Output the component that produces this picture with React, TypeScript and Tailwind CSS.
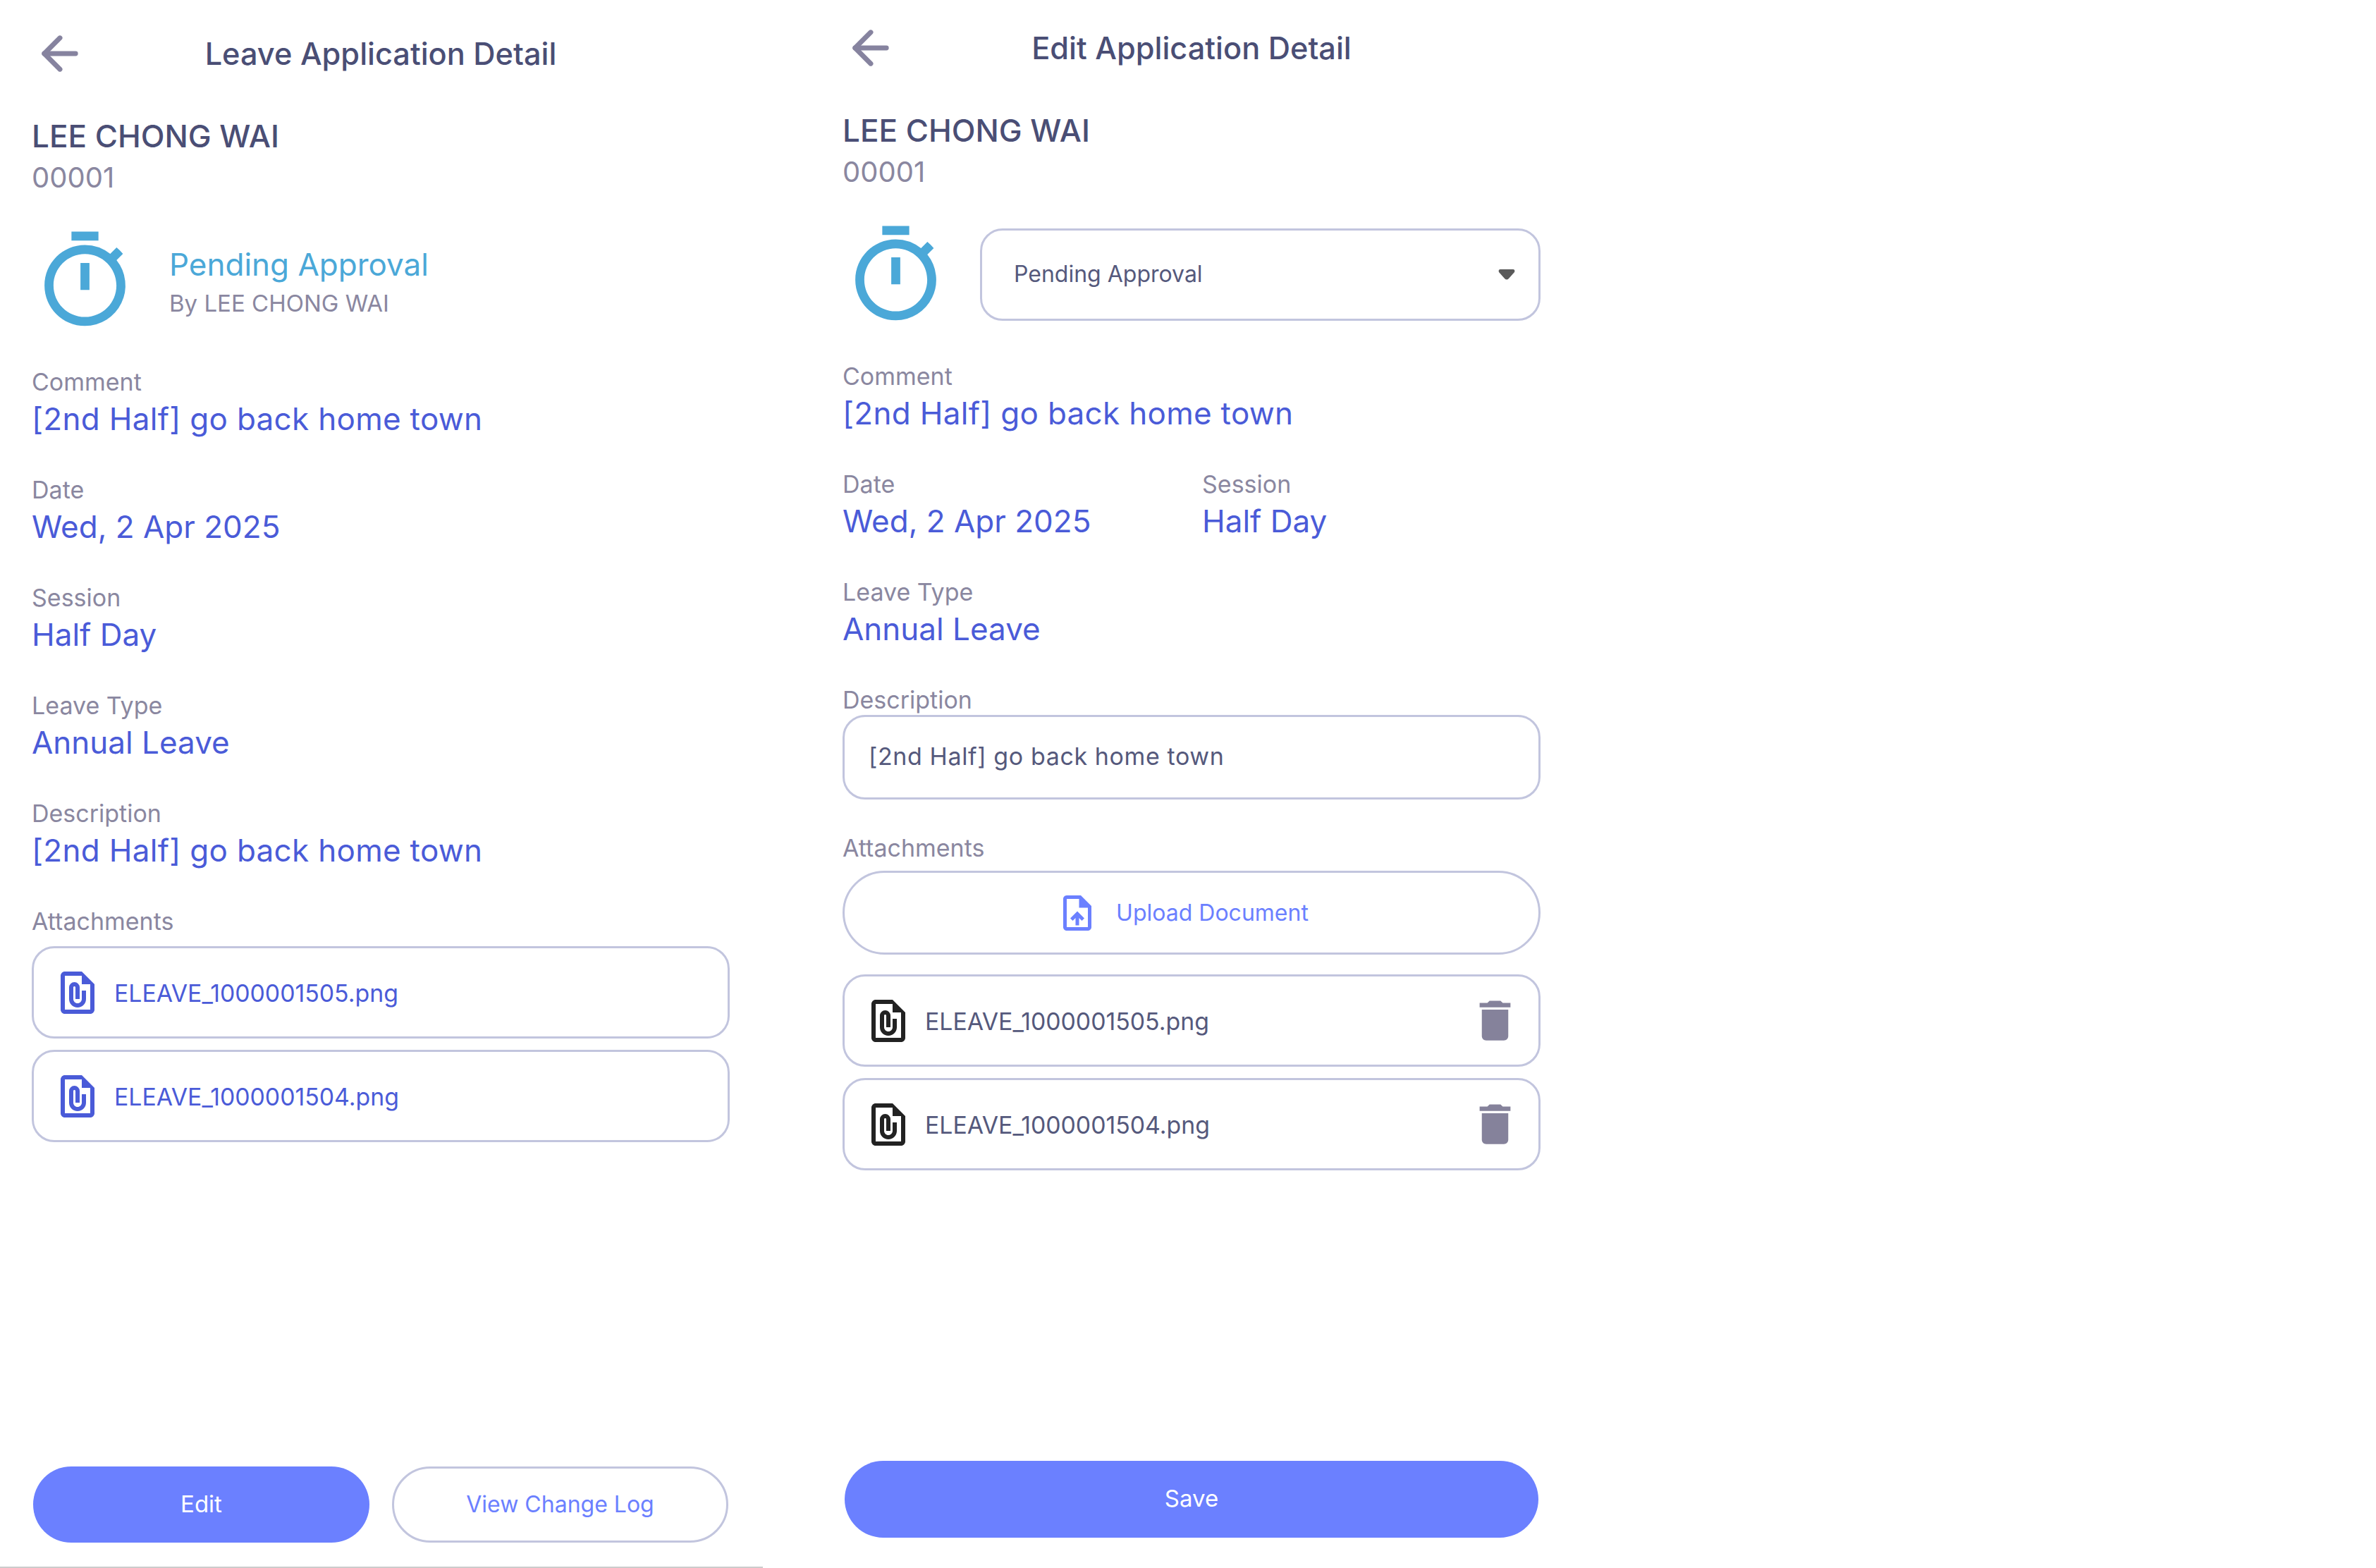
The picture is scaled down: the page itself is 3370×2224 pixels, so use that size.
import { ArrowLeft } from 'lucide-react';
import { MdDelete, MdOutlineFilePresent, MdOutlineTimer, MdOutlineUploadFile } from 'react-icons/md';

function Header({ title }: { title: string }) {
  return (
    <div className="relative flex h-[60px] items-center justify-center">
      <ArrowLeft size={76} strokeWidth={2.2} className="absolute left-[2px] top-[-8px] text-[#86839f]" />
      <h1 className="text-[43.3px] leading-[60px] font-medium text-[#4a4e75]">{title}</h1>
    </div>
  );
}

function Name() {
  return (
    <div className="mt-[57px]">
      <div className="text-[44px] leading-[60px] font-medium text-[#4a4e75]">LEE CHONG WAI</div>
      <div className="text-[40px] leading-[58px] text-[#8a87a0]">00001</div>
    </div>
  );
}

function Field({ label, value, className = '', valueClassName = '' }: { label: string; value: string; className?: string; valueClassName?: string }) {
  return (
    <div className={className}>
      <div className="text-[34px] leading-[46px] text-[#8a87a0]">{label}</div>
      <div className={`text-[44px] leading-[58px] text-[#4a5bd8] ${valueClassName}`}>{value}</div>
    </div>
  );
}

function Label({ text, className = '' }: { text: string; className?: string }) {
  return <div className={`text-[34px] leading-[46px] text-[#8a87a0] ${className}`}>{text}</div>;
}

function FileRow({ name, editable }: { name: string; editable?: boolean }) {
  return (
    <div className="flex h-[131px] items-center rounded-[32px] border-[3px] border-[#c2c5de] bg-white pl-[26px] pr-[24px]">
      <MdOutlineFilePresent size={72} className={editable ? 'shrink-0 text-[#222222]' : 'shrink-0 text-[#4a5bd8]'} />
      <span className={`ml-[16px] mt-[2px] text-[33.8px] leading-[48px] ${editable ? 'text-[#55597c]' : 'text-[#4a5bd8]'}`}>{name}</span>
      {editable && <MdDelete size={75} className="ml-auto text-[#85829b]" />}
    </div>
  );
}

function LeaveDetail() {
  return (
    <div className="flex h-[2224px] w-[1082px] shrink-0 flex-col border-b-2 border-[#cccccc] pl-[45px] pr-[47px] pt-[46px] pb-[34px]">
      <Header title="Leave Application Detail" />
      <Name />
      <div className="mt-[41px] flex items-center">
        <MdOutlineTimer size={153} className="ml-[-1px] shrink-0 text-[#4ba8d8]" />
        <div className="ml-[43px] mt-[3px]">
          <div className="text-[44px] leading-[60px] text-[#4ba8d8]">Pending Approval</div>
          <div className="text-[33px] leading-[50px] text-[#8a87a0]">By LEE CHONG WAI</div>
        </div>
      </div>
      <Field className="mt-[44px]" valueClassName="tracking-[0.3px]" label="Comment" value="[2nd Half] go back home town" />
      <Field className="mt-[49px]" label="Date" value="Wed, 2 Apr 2025" />
      <Field className="mt-[49px]" label="Session" value="Half Day" />
      <Field className="mt-[49px]" label="Leave Type" value="Annual Leave" />
      <Field className="mt-[49px]" valueClassName="tracking-[0.3px]" label="Description" value="[2nd Half] go back home town" />
      <Label className="mt-[49px]" text="Attachments" />
      <div className="mt-[12px] flex flex-col gap-[16px]">
        <FileRow name="ELEAVE_1000001505.png" />
        <FileRow name="ELEAVE_1000001504.png" />
      </div>
      <div className="mt-auto flex justify-between px-[2px]">
        <button className="h-[108px] w-[477px] rounded-full bg-[#6b80ff] text-[33px] text-white">Edit</button>
        <button className="h-[108px] w-[477px] rounded-full border-[3px] border-[#c2c5de] bg-white text-[32px] text-[#6b80ff]">View Change Log</button>
      </div>
    </div>
  );
}

function EditDetail() {
  return (
    <div className="ml-[68px] flex h-[2224px] w-[1082px] shrink-0 flex-col pl-[45px] pr-[47px] pt-[38px] pb-[43px]">
      <Header title="Edit Application Detail" />
      <Name />
      <div className="mt-[41px] flex items-center">
        <MdOutlineTimer size={153} className="ml-[-1px] shrink-0 text-[#4ba8d8]" />
        <div className="mt-[-3px] ml-[43px] flex h-[131px] flex-1 items-center justify-between rounded-[32px] border-[3px] border-[#c2c5de] pl-[45px] pr-[33px]">
          <span className="text-[32px] text-[#55597c]">Pending Approval</span>
          <svg width="24" height="16" viewBox="0 0 24 16" className="text-[#5a5a5a]">
            <path d="M3 1h18c2 0 3 2 2 4l-8 9c-2 2-4 2-6 0L1 5C0 3 1 1 3 1z" fill="currentColor" />
          </svg>
        </div>
      </div>
      <Field className="mt-[44px]" valueClassName="tracking-[0.3px]" label="Comment" value="[2nd Half] go back home town" />
      <div className="mt-[49px] flex">
        <Field className="w-[510px]" label="Date" value="Wed, 2 Apr 2025" />
        <Field label="Session" value="Half Day" />
      </div>
      <Field className="mt-[49px]" label="Leave Type" value="Annual Leave" />
      <Label className="mt-[49px]" text="Description" />
      <div className="mt-[-2px] flex h-[120px] items-center rounded-[32px] border-[3px] border-[#c2c5de] pb-[4px] pl-[34px] text-[34px] tracking-[0.6px] text-[#55597c]">[2nd Half] go back home town</div>
      <Label className="mt-[46px]" text="Attachments" />
      <div className="mt-[9px] flex h-[119px] items-center justify-center rounded-full border-[3px] border-[#c2c5de] pr-[26px]">
        <MdOutlineUploadFile size={60} className="text-[#6b80ff]" />
        <span className="ml-[25px] text-[32px] text-[#6b80ff]">Upload Document</span>
      </div>
      <div className="mt-[28px] flex flex-col gap-[16px]">
        <FileRow editable name="ELEAVE_1000001505.png" />
        <FileRow editable name="ELEAVE_1000001504.png" />
      </div>
      <button className="mx-[3px] mt-auto h-[109px] rounded-full bg-[#6b80ff] pb-[2px] text-[33px] text-white">Save</button>
    </div>
  );
}

export default function App() {
  return (
    <div className="flex h-[2224px] w-[3370px] overflow-hidden bg-white font-['Inter',sans-serif]">
      <LeaveDetail />
      <EditDetail />
    </div>
  );
}
